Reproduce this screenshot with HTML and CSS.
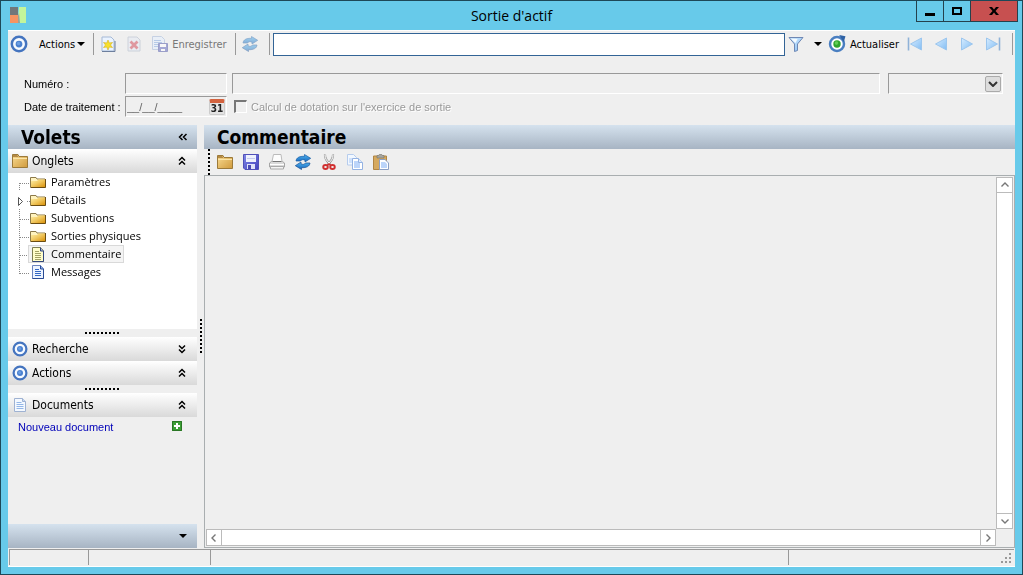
FILE: index.html
```html
<!DOCTYPE html>
<html lang="fr">
<head>
    <meta charset="UTF-8">
    <meta name="viewport" content="width=device-width, initial-scale=1.0">
    <title>Sortie d'actif</title>
    <link rel="stylesheet" href="styles.css">
</head>
<body>
    <!-- Shared icons -->
    <svg class="sprite" aria-hidden="true">
        <defs>
            <linearGradient id="gold" x1="0" y1="0" x2="1" y2="1">
                <stop offset="0" stop-color="#fff0a8"/>
                <stop offset="0.5" stop-color="#f0c75e"/>
                <stop offset="1" stop-color="#d9920c"/>
            </linearGradient>
            <linearGradient id="tan" x1="0" y1="0" x2="1" y2="1">
                <stop offset="0" stop-color="#f9dc93"/>
                <stop offset="1" stop-color="#d09a3c"/>
            </linearGradient>
            <linearGradient id="sky" x1="0" y1="0" x2="1" y2="1">
                <stop offset="0" stop-color="#d8edff"/>
                <stop offset="1" stop-color="#82bdf4"/>
            </linearGradient>
            <linearGradient id="swirl" x1="0" y1="0" x2="0" y2="1">
                <stop offset="0" stop-color="#4fb4f0"/>
                <stop offset="1" stop-color="#1767bd"/>
            </linearGradient>
            <linearGradient id="floppy" x1="0" y1="0" x2="1" y2="1">
                <stop offset="0" stop-color="#7f86e6"/>
                <stop offset="1" stop-color="#4343bd"/>
            </linearGradient>
        </defs>
        <symbol id="i-target" viewBox="0 0 16 16">
            <circle cx="8" cy="8" r="6.4" fill="#f6faff" stroke="#4474bf" stroke-width="2.200"/>
            <circle cx="8" cy="8" r="3" fill="#4a80cf"/>
            <circle cx="7.6" cy="7.5" r="1.500" fill="#6a9de2"/>
        </symbol>
        <symbol id="i-folder" viewBox="0 0 16 16">
            <path d="M.5 1.500h5.500l1 2h8.500v11H.5z" fill="url(#tan)" stroke="#9c7a3a"/>
            <path d="M1 2.500h4.500M1 3.500h5" stroke="#b58a45"/>
            <path d="M1 5.500h14" stroke="#fbe5a8"/>
        </symbol>
        <symbol id="i-tree-folder" viewBox="0 0 16 16">
            <path d="M.5 3.500h5.500l1 1.500h8v8.500H.5z" fill="#fff3bf" stroke="#8d7a4a"/>
            <path d="M1 13V7h6l1.500-1.500H15V13z" fill="url(#gold)"/>
            <path d="M1 13.500h14.500V5" fill="none" stroke="#6b4c10"/>
        </symbol>
        <symbol id="i-refresh" viewBox="0 0 16 16">
            <path d="M1 7C1.500 3.500 4.500 2.200 9.500 2.300V.5L15.700 4.300 10 8V6.200C8 5.300 6.500 5.500 5.500 7z" fill="url(#swirl)" stroke="#185ba3" stroke-width=".7"/>
            <path d="M15 9C14.500 12.500 11.500 13.800 6.500 13.700v1.800L.3 11.700 6 8v1.800c2 .9 3.500.7 4.500-.8z" fill="url(#swirl)" stroke="#174f93" stroke-width=".7"/>
        </symbol>
        <symbol id="i-doc" viewBox="0 0 16 16">
            <path d="M2.500 1.500h8l3 3v10h-11z" fill="#f4f9ff" stroke="#9fb2d2"/>
            <path d="M10.500 1.500v3h3" fill="#c9dcf5" stroke="#9fb2d2"/>
            <path d="M4.500 5.500h5M4.500 7.500h7M4.500 9.500h7M4.500 11.500h7" stroke="#94b7e8"/>
        </symbol>
        <symbol id="i-up" viewBox="0 0 8 10">
            <path d="M1 4.500l3-3 3 3M1 8.500l3-3 3 3" fill="none" stroke="#000" stroke-width="1.500"/>
        </symbol>
        <symbol id="i-caret" viewBox="0 0 8 4">
            <path d="M0 0h8L4 4z" fill="#000"/>
        </symbol>
        <symbol id="i-chevron" viewBox="0 0 10 10">
            <path d="M1.500 6.500L5 3l3.500 3.500" fill="none" stroke="#777" stroke-width="1.400"/>
        </symbol>
        <symbol id="b-first" viewBox="0 0 22 18">
            <path d="M11.500 10v8M12 10.500h10" class="dots"/>
        </symbol>
        <symbol id="b-mid" viewBox="0 0 22 18">
            <path d="M11.500 0v18M12 10.500h10" class="dots"/>
        </symbol>
        <symbol id="b-last" viewBox="0 0 22 18">
            <path d="M11.500 0v11M12 10.500h10" class="dots"/>
        </symbol>
        <symbol id="b-expand" viewBox="0 0 22 18">
            <path d="M19 10.500h3" class="dots"/>
            <path d="M10.500 6.500v8l4-4z" fill="#fff" stroke="#555"/>
        </symbol>
    </svg>

    <div class="window">
        <header class="titlebar">
            <svg class="app-logo" viewBox="0 0 16 16" aria-hidden="true">
                <path d="M0 0h8v8H0z" fill="#71777a"/>
                <path d="M0 8h8v8H0z" fill="#f69462"/>
                <path d="M9 0h7v16h-6L8 13z" fill="#c3f59b"/>
                <path d="M9 6l1 10H8V9z" fill="#9aa39a"/>
            </svg>
            <h1>Sortie d'actif</h1>
            <div class="window-buttons">
                <button type="button" aria-label="Réduire"><svg width="10" height="10" viewBox="0 0 10 10"><path d="M0 7h10v3H0z"/></svg></button>
                <button type="button" aria-label="Agrandir"><svg width="10" height="8" viewBox="0 0 10 8"><path d="M1 1h8v6H1z" fill="none" stroke="#000" stroke-width="2"/></svg></button>
                <button type="button" class="close" aria-label="Fermer"><svg width="10" height="8" viewBox="0 0 10 8"><path d="M0 0h3l2 2.500L7 0h3L6.500 4 10 8H7L5 5.500 3 8H0l3.500-4z"/></svg></button>
            </div>
        </header>

        <div class="client">
            <div class="toolbar">
                <button type="button" class="tool menu-btn">
                    <svg class="icon big"><use href="#i-target"/></svg>
                    <span>Actions</span>
                    <svg class="caret"><use href="#i-caret"/></svg>
                </button>
                <span class="sep"></span>
                <div class="tool-group">
                    <button type="button" class="tool" aria-label="Nouveau">
                        <svg class="icon" viewBox="0 0 16 16">
                            <path d="M2 1h9l3 3v11H2z" fill="#eaf3ff" stroke="#a5b9d6"/>
                            <path d="M2 15.500h13V5" fill="none" stroke="#6d7f9d"/>
                            <path d="M8 4l1.300 3 3.200-.5-2 2.500 2 2.500-3.200-.5L8 14l-1.300-3-3.200.5 2-2.500-2-2.500 3.200.5z" fill="#f7e02c" stroke="#d5ae20" stroke-width=".6"/>
                        </svg>
                    </button>
                    <button type="button" class="tool" aria-label="Supprimer" disabled>
                        <svg class="icon" viewBox="0 0 16 16">
                            <path d="M2 1h9l3 3v11H2z" fill="#e4e9f4" stroke="#a9b4c6"/>
                            <path d="M4.500 5.500l7 7M11.500 5.500l-7 7" stroke="#cf4350" stroke-width="2.800"/>
                        </svg>
                    </button>
                    <button type="button" class="tool" disabled>
                        <svg class="icon" viewBox="0 0 16 16">
                            <path d="M.5.5h9l3 3v10H.5z" fill="#e4efff" stroke="#9db4d8"/>
                            <path d="M2 4.500h7M2 6.500h8M2 8.500h4M2 10.500h4" stroke="#7fa6e0"/>
                            <path d="M6.500 7.500h9v8h-9z" fill="#5a63bb" stroke="#474fa2"/>
                            <path d="M8 8h6v3H8zM9 13h4v2H9z" fill="#fff"/>
                        </svg>
                        <span>Enregistrer</span>
                    </button>
                </div>
                <span class="sep"></span>
                <button type="button" class="tool sync" aria-label="Synchroniser" disabled><svg class="icon"><use href="#i-refresh"/></svg></button>
                <span class="sep"></span>
                <input type="text" class="search" aria-label="Recherche" autofocus>
                <button type="button" class="tool filter" aria-label="Filtrer">
                    <svg class="icon" viewBox="0 0 16 16">
                        <path d="M1 1.500h14L9.500 8v6.500l-3 1V8z" fill="url(#sky)" stroke="#6f88b4"/>
                        <path d="M3.500 3h6L7.500 7z" fill="#f6fbff"/>
                    </svg>
                    <svg class="caret"><use href="#i-caret"/></svg>
                </button>
                <button type="button" class="tool">
                    <svg class="icon big" viewBox="0 0 16 16">
                        <circle cx="8" cy="8" r="6.200" fill="#fff" stroke="#4a7fc1" stroke-width="2.200"/>
                        <path d="M10 0l5.500 1L14 6.500z" fill="#2f62a5"/>
                        <circle cx="8" cy="8" r="3.300" fill="#32a52d"/>
                        <circle cx="7.500" cy="7.200" r="1.600" fill="#63ce54"/>
                    </svg>
                    <span>Actualiser</span>
                </button>
                <div class="nav">
                    <button type="button" class="tool" aria-label="Premier"><svg class="icon" viewBox="0 0 16 16"><path d="M1.500 1.500v13" stroke="#8fb2d8" stroke-width="1.600"/><path d="M14.500 2v12L3.500 8z" fill="url(#sky)" stroke="#9cc6ee"/></svg></button>
                    <button type="button" class="tool" aria-label="Précédent"><svg class="icon" viewBox="0 0 16 16"><path d="M13.500 2v12L2.500 8z" fill="url(#sky)" stroke="#9cc6ee"/></svg></button>
                    <button type="button" class="tool" aria-label="Suivant"><svg class="icon" viewBox="0 0 16 16"><path d="M2.500 2v12l11-6z" fill="url(#sky)" stroke="#9cc6ee"/></svg></button>
                    <button type="button" class="tool" aria-label="Dernier"><svg class="icon" viewBox="0 0 16 16"><path d="M14.500 1.500v13" stroke="#8fb2d8" stroke-width="1.600"/><path d="M1.500 2v12l11-6z" fill="url(#sky)" stroke="#9cc6ee"/></svg></button>
                </div>
                <span class="sep"></span>
            </div>

            <form class="fields">
                <div class="field-row">
                    <label for="numero">Numéro :</label>
                    <input type="text" id="numero" class="sunken code" disabled>
                    <input type="text" class="sunken grow" aria-label="Libellé" disabled>
                    <div class="sunken select-box">
                        <select aria-label="Type" disabled><option></option></select>
                        <span class="drop"><svg width="10" height="6" viewBox="0 0 10 6"><path d="M1 1l4 4 4-4" fill="none" stroke="#333" stroke-width="2"/></svg></span>
                    </div>
                </div>
                <div class="field-row">
                    <label for="date">Date de traitement :</label>
                    <div class="sunken code date-box">
                        <input type="text" id="date" value="__/__/____" disabled>
                        <button type="button" class="calendar" aria-label="Calendrier" disabled><span>31</span></button>
                    </div>
                    <input type="checkbox" id="dotation" disabled>
                    <label for="dotation" class="check-label">Calcul de dotation sur l'exercice de sortie</label>
                </div>
            </form>

            <div class="workspace">
                <aside class="sidebar">
                    <div class="band">
                        <h2>Volets</h2>
                        <button type="button" class="fold" aria-label="Replier les volets"><svg class="dbl left"><use href="#i-up"/></svg></button>
                    </div>
                    <button type="button" class="section">
                        <svg class="icon"><use href="#i-folder"/></svg>
                        <span>Onglets</span>
                        <svg class="dbl"><use href="#i-up"/></svg>
                    </button>
                    <ul class="tree">
                        <li><svg class="branch"><use href="#b-first"/></svg><a href="#"><svg class="icon"><use href="#i-tree-folder"/></svg>Paramètres</a></li>
                        <li><svg class="branch"><use href="#b-expand"/></svg><a href="#"><svg class="icon"><use href="#i-tree-folder"/></svg>Détails</a></li>
                        <li><svg class="branch"><use href="#b-mid"/></svg><a href="#"><svg class="icon"><use href="#i-tree-folder"/></svg>Subventions</a></li>
                        <li><svg class="branch"><use href="#b-mid"/></svg><a href="#"><svg class="icon"><use href="#i-tree-folder"/></svg>Sorties physiques</a></li>
                        <li><svg class="branch"><use href="#b-mid"/></svg><a href="#" class="selected"><svg class="icon" viewBox="0 0 16 16">
                            <path d="M2.500 1.500h8l3 3v11h-11z" fill="#fffdc9" stroke="#7f7f52"/>
                            <path d="M10.500 1.500v3.500h3" fill="#aabbe0" stroke="#32477d"/>
                            <path d="M13.500 5v10.500h-11" fill="none" stroke="#32477d"/>
                            <path d="M5 5.500h4M5 7.500h6M5 9.500h6M5 11.500h6M5 13.500h6" stroke="#a3a166"/>
                        </svg>Commentaire</a></li>
                        <li><svg class="branch"><use href="#b-last"/></svg><a href="#"><svg class="icon" viewBox="0 0 16 16">
                            <path d="M2.500 1.500h8l3 3v10h-11z" fill="#edf4ff" stroke="#6a84bf"/>
                            <path d="M10.500 1.500v3.500h3" fill="#8eafe9" stroke="#294a94"/>
                            <path d="M13.500 5v9.500h-11" fill="none" stroke="#294a94"/>
                            <path d="M5 5.500h4M5 7.500h6M5 9.500h6M5 11.500h6" stroke="#3468c4"/>
                        </svg>Messages</a></li>
                    </ul>
                    <div class="splitter"><span></span></div>
                    <button type="button" class="section">
                        <svg class="icon"><use href="#i-target"/></svg>
                        <span>Recherche</span>
                        <svg class="dbl down"><use href="#i-up"/></svg>
                    </button>
                    <button type="button" class="section">
                        <svg class="icon"><use href="#i-target"/></svg>
                        <span>Actions</span>
                        <svg class="dbl"><use href="#i-up"/></svg>
                    </button>
                    <div class="splitter"><span></span></div>
                    <button type="button" class="section">
                        <svg class="icon"><use href="#i-doc"/></svg>
                        <span>Documents</span>
                        <svg class="dbl"><use href="#i-up"/></svg>
                    </button>
                    <div class="documents">
                        <a href="#">Nouveau document</a>
                        <button type="button" class="add" aria-label="Ajouter un document">
                            <svg width="10" height="10" viewBox="0 0 10 10"><path d="M0 0h10v10H0z" fill="#3c9e35"/><path d="M.5.5h9v9h-9z" fill="none" stroke="#2a7625"/><path d="M5 2v6M2 5h6" stroke="#fff" stroke-width="2"/></svg>
                        </button>
                    </div>
                    <div class="band bottom">
                        <button type="button" class="fold" aria-label="Options des volets"><svg class="caret"><use href="#i-caret"/></svg></button>
                    </div>
                </aside>

                <div class="v-splitter"><span></span></div>

                <main class="content">
                    <div class="band">
                        <h2>Commentaire</h2>
                    </div>
                    <div class="edit-tools">
                        <span class="grip"></span>
                        <button type="button" class="tool" aria-label="Ouvrir"><svg class="icon"><use href="#i-folder"/></svg></button>
                        <button type="button" class="tool" aria-label="Enregistrer">
                            <svg class="icon" viewBox="0 0 16 16">
                                <path d="M.5.5h15v15H2l-1.500-1.500z" fill="url(#floppy)" stroke="#5050b8"/>
                                <path d="M3 1h10v7H3z" fill="#eef1fd"/>
                                <path d="M4 4.500h8" stroke="#c3c9ee"/>
                                <path d="M4 10h8v5H4z" fill="#dfe3f8"/>
                                <path d="M5 11h3v4H5z" fill="#4a4ab4"/>
                            </svg>
                        </button>
                        <button type="button" class="tool" aria-label="Imprimer">
                            <svg class="icon" viewBox="0 0 16 16">
                                <path d="M3 7.500l1.500-7h7.500l1 7z" fill="#fdfdfd" stroke="#bbb"/>
                                <path d="M.5 9L2.500 7.500h11l2 1.500v4H.5z" fill="#dadada" stroke="#a6a6a6"/>
                                <path d="M4 7.500h8" stroke="#777"/>
                                <path d="M1 10.500h14" stroke="#fff"/>
                                <path d="M1.500 12.500h13v2.500h-13z" fill="#f4f4f4" stroke="#aaa"/>
                            </svg>
                        </button>
                        <button type="button" class="tool" aria-label="Rafraîchir"><svg class="icon"><use href="#i-refresh"/></svg></button>
                        <button type="button" class="tool" aria-label="Couper">
                            <svg class="icon" viewBox="0 0 16 16">
                                <path d="M4 .5c-.5 3.500 1.500 6 5.500 10.500M12 .5c.5 3.500-1.500 6-5.500 10.500" fill="none" stroke="#9a9a9a" stroke-width="2.200"/>
                                <path d="M4 1c0 3.500 1.500 5.500 4.500 8.500M12 1c0 3.500-1.500 5.500-4.500 8.500" fill="none" stroke="#fff" stroke-width="1"/>
                                <ellipse cx="4.500" cy="13" rx="2.300" ry="2" fill="none" stroke="#d03030" stroke-width="1.900"/>
                                <ellipse cx="11.500" cy="13" rx="2.300" ry="2" fill="none" stroke="#d03030" stroke-width="1.900"/>
                                <path d="M6 11.500l2-1.500 2 1.500" fill="none" stroke="#d03030" stroke-width="1.500"/>
                            </svg>
                        </button>
                        <button type="button" class="tool" aria-label="Copier">
                            <svg class="icon" viewBox="0 0 16 16">
                                <path d="M.5.500h6l3 3V11h-9z" fill="#f2f8ff" stroke="#b6cced"/>
                                <path d="M2 4h5v5H2z" fill="#cfe1fb"/>
                                <path d="M5.500 4.500h6l4 4v7h-10z" fill="#fff" stroke="#94b2e2"/>
                                <path d="M7 7h4l2 2v5H7z" fill="#bcd5fa"/>
                                <path d="M11.500 4.500v4h4" fill="#dce9fc" stroke="#94b2e2"/>
                            </svg>
                        </button>
                        <button type="button" class="tool" aria-label="Coller">
                            <svg class="icon" viewBox="0 0 16 16">
                                <path d="M.5 2h13v13.500H.5z" fill="#d5a95f" stroke="#b08544"/>
                                <path d="M4 4V1.500h1.500L6.500.3h2l1 1.200H11V4z" fill="#a5a5a0" stroke="#77736a" stroke-width=".6"/>
                                <path d="M6.500 5.500h5.500l3.500 3.500v6.500h-9z" fill="#fff" stroke="#8b9fc4"/>
                                <path d="M8 8h4l2 2v4H8z" fill="#bcd5fa"/>
                            </svg>
                        </button>
                    </div>
                    <div class="editor">
                        <textarea aria-label="Commentaire"></textarea>
                        <div class="scroll vertical">
                            <button type="button" aria-label="Défiler vers le haut"><svg class="chev"><use href="#i-chevron"/></svg></button>
                            <button type="button" aria-label="Défiler vers le bas"><svg class="chev to-down"><use href="#i-chevron"/></svg></button>
                        </div>
                        <div class="scroll horizontal">
                            <button type="button" aria-label="Défiler à gauche"><svg class="chev to-left"><use href="#i-chevron"/></svg></button>
                            <button type="button" aria-label="Défiler à droite"><svg class="chev to-right"><use href="#i-chevron"/></svg></button>
                        </div>
                    </div>
                </main>
            </div>

            <footer class="statusbar">
                <span class="cell-s"></span>
                <span class="cell-m"></span>
                <span class="cell-grow"></span>
                <span class="cell-l">
                    <svg width="11" height="11" viewBox="0 0 11 11" aria-hidden="true"><path d="M8 0h2v2H8zM4 4h2v2H4zM8 4h2v2H8zM0 8h2v2H0zM4 8h2v2H4zM8 8h2v2H8z" fill="#999"/></svg>
                </span>
            </footer>
        </div>
    </div>
</body>
</html>
```
FILE: styles.css
```css
* {
    box-sizing: border-box;
}
body {
    margin: 0;
    font-family: "Liberation Sans", Arial, sans-serif;
    font-size: 11px;
    color: #000;
}
button,
input,
select,
textarea {
    font: inherit;
    color: inherit;
    margin: 0;
}
button {
    background: none;
    border: none;
    padding: 0;
}
svg {
    display: block;
    flex: none;
}
.sprite {
    position: absolute;
    width: 0;
    height: 0;
}
.dots {
    fill: none;
    stroke: #888;
    stroke-dasharray: 1 1;
}
.window {
    height: 100vh;
    display: flex;
    flex-direction: column;
    background-color: #67caea;
    border: 1px solid #1d4858;
    padding: 0 7px 7px;
}

/* Title bar */
.titlebar {
    display: grid;
    grid-template-columns: 1fr auto 1fr;
    height: 29px;
    flex: none;
}
.app-logo {
    width: 16px;
    height: 16px;
    margin: 6px 2px;
}
.titlebar h1 {
    margin: 0;
    font: 14px/29px "Open Sans", sans-serif;
}
.window-buttons {
    display: flex;
    justify-self: end;
    height: 21px;
    margin-right: -3px;
    border: 1px solid #24414c;
    border-top: none;
}
.window-buttons button {
    display: flex;
    align-items: center;
    justify-content: center;
    width: 27px;
    border-right: 1px solid #24414c;
}
.window-buttons .close {
    width: 46px;
    background-color: #c75050;
    border-right: none;
}

.client {
    flex: 1;
    min-height: 0;
    display: flex;
    flex-direction: column;
    background-color: #efefef;
    border-top: 1px solid #fff;
}

/* Main toolbar */
.toolbar {
    display: flex;
    align-items: center;
    height: 26px;
    flex: none;
    padding: 0 2px;
    font-family: "DejaVu Sans Condensed", "DejaVu Sans", sans-serif;
}
.tool {
    display: flex;
    align-items: center;
    gap: 4px;
}
.tool:disabled {
    color: #777;
}
.tool:disabled .icon {
    opacity: 0.5;
}
.icon {
    width: 16px;
    height: 16px;
}
.icon.big {
    width: 18px;
    height: 18px;
}
.caret {
    width: 8px;
    height: 4px;
}
.menu-btn .big {
    margin-right: 9px;
}
.menu-btn {
    gap: 2px;
}
.sep {
    width: 1px;
    height: 22px;
    background-color: #999;
    flex: none;
    margin: 0 3px 0 8px;
}
.toolbar > .sep:last-child {
    margin-right: 0;
}
.tool-group {
    display: flex;
    gap: 10px;
    padding-left: 3px;
}
.sync {
    padding: 0 3px;
}
.search {
    flex: 1;
    min-width: 0;
    height: 23px;
    padding: 0 2px;
    border: 1px solid #336496;
    background-color: #fff;
    outline: none;
    font-size: 14px;
}
.filter {
    gap: 10px;
    margin: 0 6px 0 3px;
}
.nav {
    display: flex;
    gap: 10px;
    margin: 0 3px 0 8px;
}

/* Record fields */
.fields {
    display: flex;
    flex-direction: column;
    gap: 2px;
    flex: none;
    padding: 16px 12px 8px 16px;
}
.field-row {
    display: flex;
    align-items: center;
    height: 21px;
}
.field-row > label:first-child {
    width: 101px;
    flex: none;
}
.sunken {
    height: 21px;
    border: 1px solid #999;
    border-right-color: #fff;
    border-bottom-color: #fff;
    background-color: #efefef;
}
.code {
    width: 102px;
    flex: none;
}
.grow {
    flex: 1;
    min-width: 0;
    margin: 0 8px 0 5px;
}
.select-box,
.date-box {
    display: flex;
    align-items: center;
}
.select-box {
    width: 115px;
    padding-right: 1px;
}
.select-box select {
    flex: 1;
    min-width: 0;
    appearance: none;
    border: none;
    background: none;
}
.drop {
    display: flex;
    align-items: center;
    justify-content: center;
    width: 16px;
    height: 16px;
    border: 1px solid #aaa;
    border-radius: 2px;
    background-color: #ddd;
}
.date-box input {
    flex: 1;
    min-width: 0;
    padding: 0 1px;
    border: none;
    background: none;
    color: #666;
}
.calendar {
    width: 16px;
    height: 16px;
    margin-right: 1px;
    border: 1px solid #ccc;
    border-top: 4px solid #d3633f;
    border-radius: 2px;
    background-color: #e3e3e3;
    color: #222;
    font: bold 10px/11px "DejaVu Sans Condensed", sans-serif;
}
input[type="checkbox"] {
    appearance: none;
    width: 13px;
    height: 13px;
    margin: 0 4px 0 7px;
    border: 1px solid #fff;
    border-top: 2px solid #777;
    border-left: 2px solid #777;
}
.check-label {
    color: #999;
    text-shadow: 1px 1px #fff;
}

/* Panels */
.workspace {
    flex: 1;
    min-height: 0;
    display: flex;
}
.band {
    display: flex;
    align-items: center;
    justify-content: space-between;
    height: 24px;
    flex: none;
    padding: 0 10px 0 13px;
    background: linear-gradient(#d5e2ee, #a7b4c3);
}
.band h2 {
    margin: 0;
    font: bold 19px/24px "DejaVu Sans Condensed", "DejaVu Sans", sans-serif;
}
.sidebar {
    width: 189px;
    flex: none;
    display: flex;
    flex-direction: column;
}
.section {
    display: flex;
    align-items: center;
    gap: 4px;
    height: 24px;
    flex: none;
    padding: 0 11px 0 4px;
    background: linear-gradient(#fff, #d9d9d9);
    font: 12px "DejaVu Sans Condensed", "DejaVu Sans", sans-serif;
    text-align: left;
}
.section span {
    flex: 1;
}
.dbl {
    width: 8px;
    height: 10px;
}
.dbl.down {
    transform: rotate(180deg);
}
.dbl.left {
    transform: rotate(-90deg);
}
.tree {
    height: 156px;
    margin: 0;
    padding: 0;
    list-style: none;
    background-color: #fff;
    font: 11px/16px "Open Sans", sans-serif;
}
.tree li {
    display: flex;
    height: 18px;
}
.branch {
    width: 22px;
    height: 18px;
}
.tree a {
    display: flex;
    align-items: center;
    gap: 5px;
    margin-left: -2px;
    padding: 0 2px 0 1px;
    border: 1px solid transparent;
    color: #000;
    text-decoration: none;
}
.tree .selected {
    background-color: #f4f4f4;
    border-color: #d9d9d9;
}
.splitter {
    display: flex;
    justify-content: center;
    height: 8px;
    flex: none;
    padding-top: 3px;
}
.splitter span {
    width: 35px;
    height: 2px;
    background: repeating-linear-gradient(90deg, #000 0 2px, transparent 2px 4px);
}
.documents {
    flex: 1;
    display: flex;
    align-items: flex-start;
    justify-content: space-between;
    padding: 4px 15px 0 10px;
}
.documents a {
    line-height: 13px;
    color: #0000b8;
    text-decoration: none;
}
.band.bottom {
    justify-content: flex-end;
}
.v-splitter {
    display: flex;
    align-items: center;
    justify-content: center;
    width: 7px;
    flex: none;
}
.v-splitter span {
    width: 2px;
    height: 35px;
    background: repeating-linear-gradient(#000 0 2px, transparent 2px 4px);
}

/* Comment editor */
.content {
    flex: 1;
    min-width: 0;
    display: flex;
    flex-direction: column;
}
.edit-tools {
    display: flex;
    align-items: center;
    gap: 10px;
    height: 26px;
    flex: none;
    padding-left: 4px;
}
.grip {
    width: 2px;
    height: 26px;
    margin-right: -3px;
    background: repeating-linear-gradient(#000 0 2px, transparent 2px 4px);
}
.editor {
    flex: 1;
    min-height: 0;
    display: grid;
    grid-template-columns: 1fr 17px;
    grid-template-rows: 1fr 17px;
    padding: 1px;
    border: 1px solid #a9aeb0;
}
.editor textarea {
    min-width: 0;
    border: none;
    background: none;
    outline: none;
    resize: none;
    overflow: hidden;
}
.scroll {
    display: flex;
    justify-content: space-between;
    background-color: #fff;
    border: 1px solid #bbb;
}
.scroll button {
    display: flex;
    align-items: center;
    justify-content: center;
    width: 15px;
    height: 15px;
}
.vertical {
    flex-direction: column;
}
.vertical button:first-child {
    border-bottom: 1px solid #bbb;
}
.vertical button:last-child {
    border-top: 1px solid #bbb;
}
.horizontal button:first-child {
    border-right: 1px solid #bbb;
}
.horizontal button:last-child {
    border-left: 1px solid #bbb;
}
.chev {
    width: 10px;
    height: 10px;
}
.to-down {
    transform: rotate(180deg);
}
.to-left {
    transform: rotate(-90deg);
}
.to-right {
    transform: rotate(90deg);
}

/* Status bar */
.statusbar {
    display: flex;
    height: 19px;
    flex: none;
    padding: 1px;
    border-bottom: 1px solid #fff;
}
.statusbar span {
    border-left: 1px solid #999;
    border-top: 1px solid #999;
}
.cell-s {
    width: 79px;
}
.cell-m {
    width: 122px;
}
.cell-grow {
    flex: 1;
}
.cell-l {
    display: flex;
    align-items: flex-end;
    justify-content: flex-end;
    width: 226px;
    padding: 0 2px 1px 0;
}
```
